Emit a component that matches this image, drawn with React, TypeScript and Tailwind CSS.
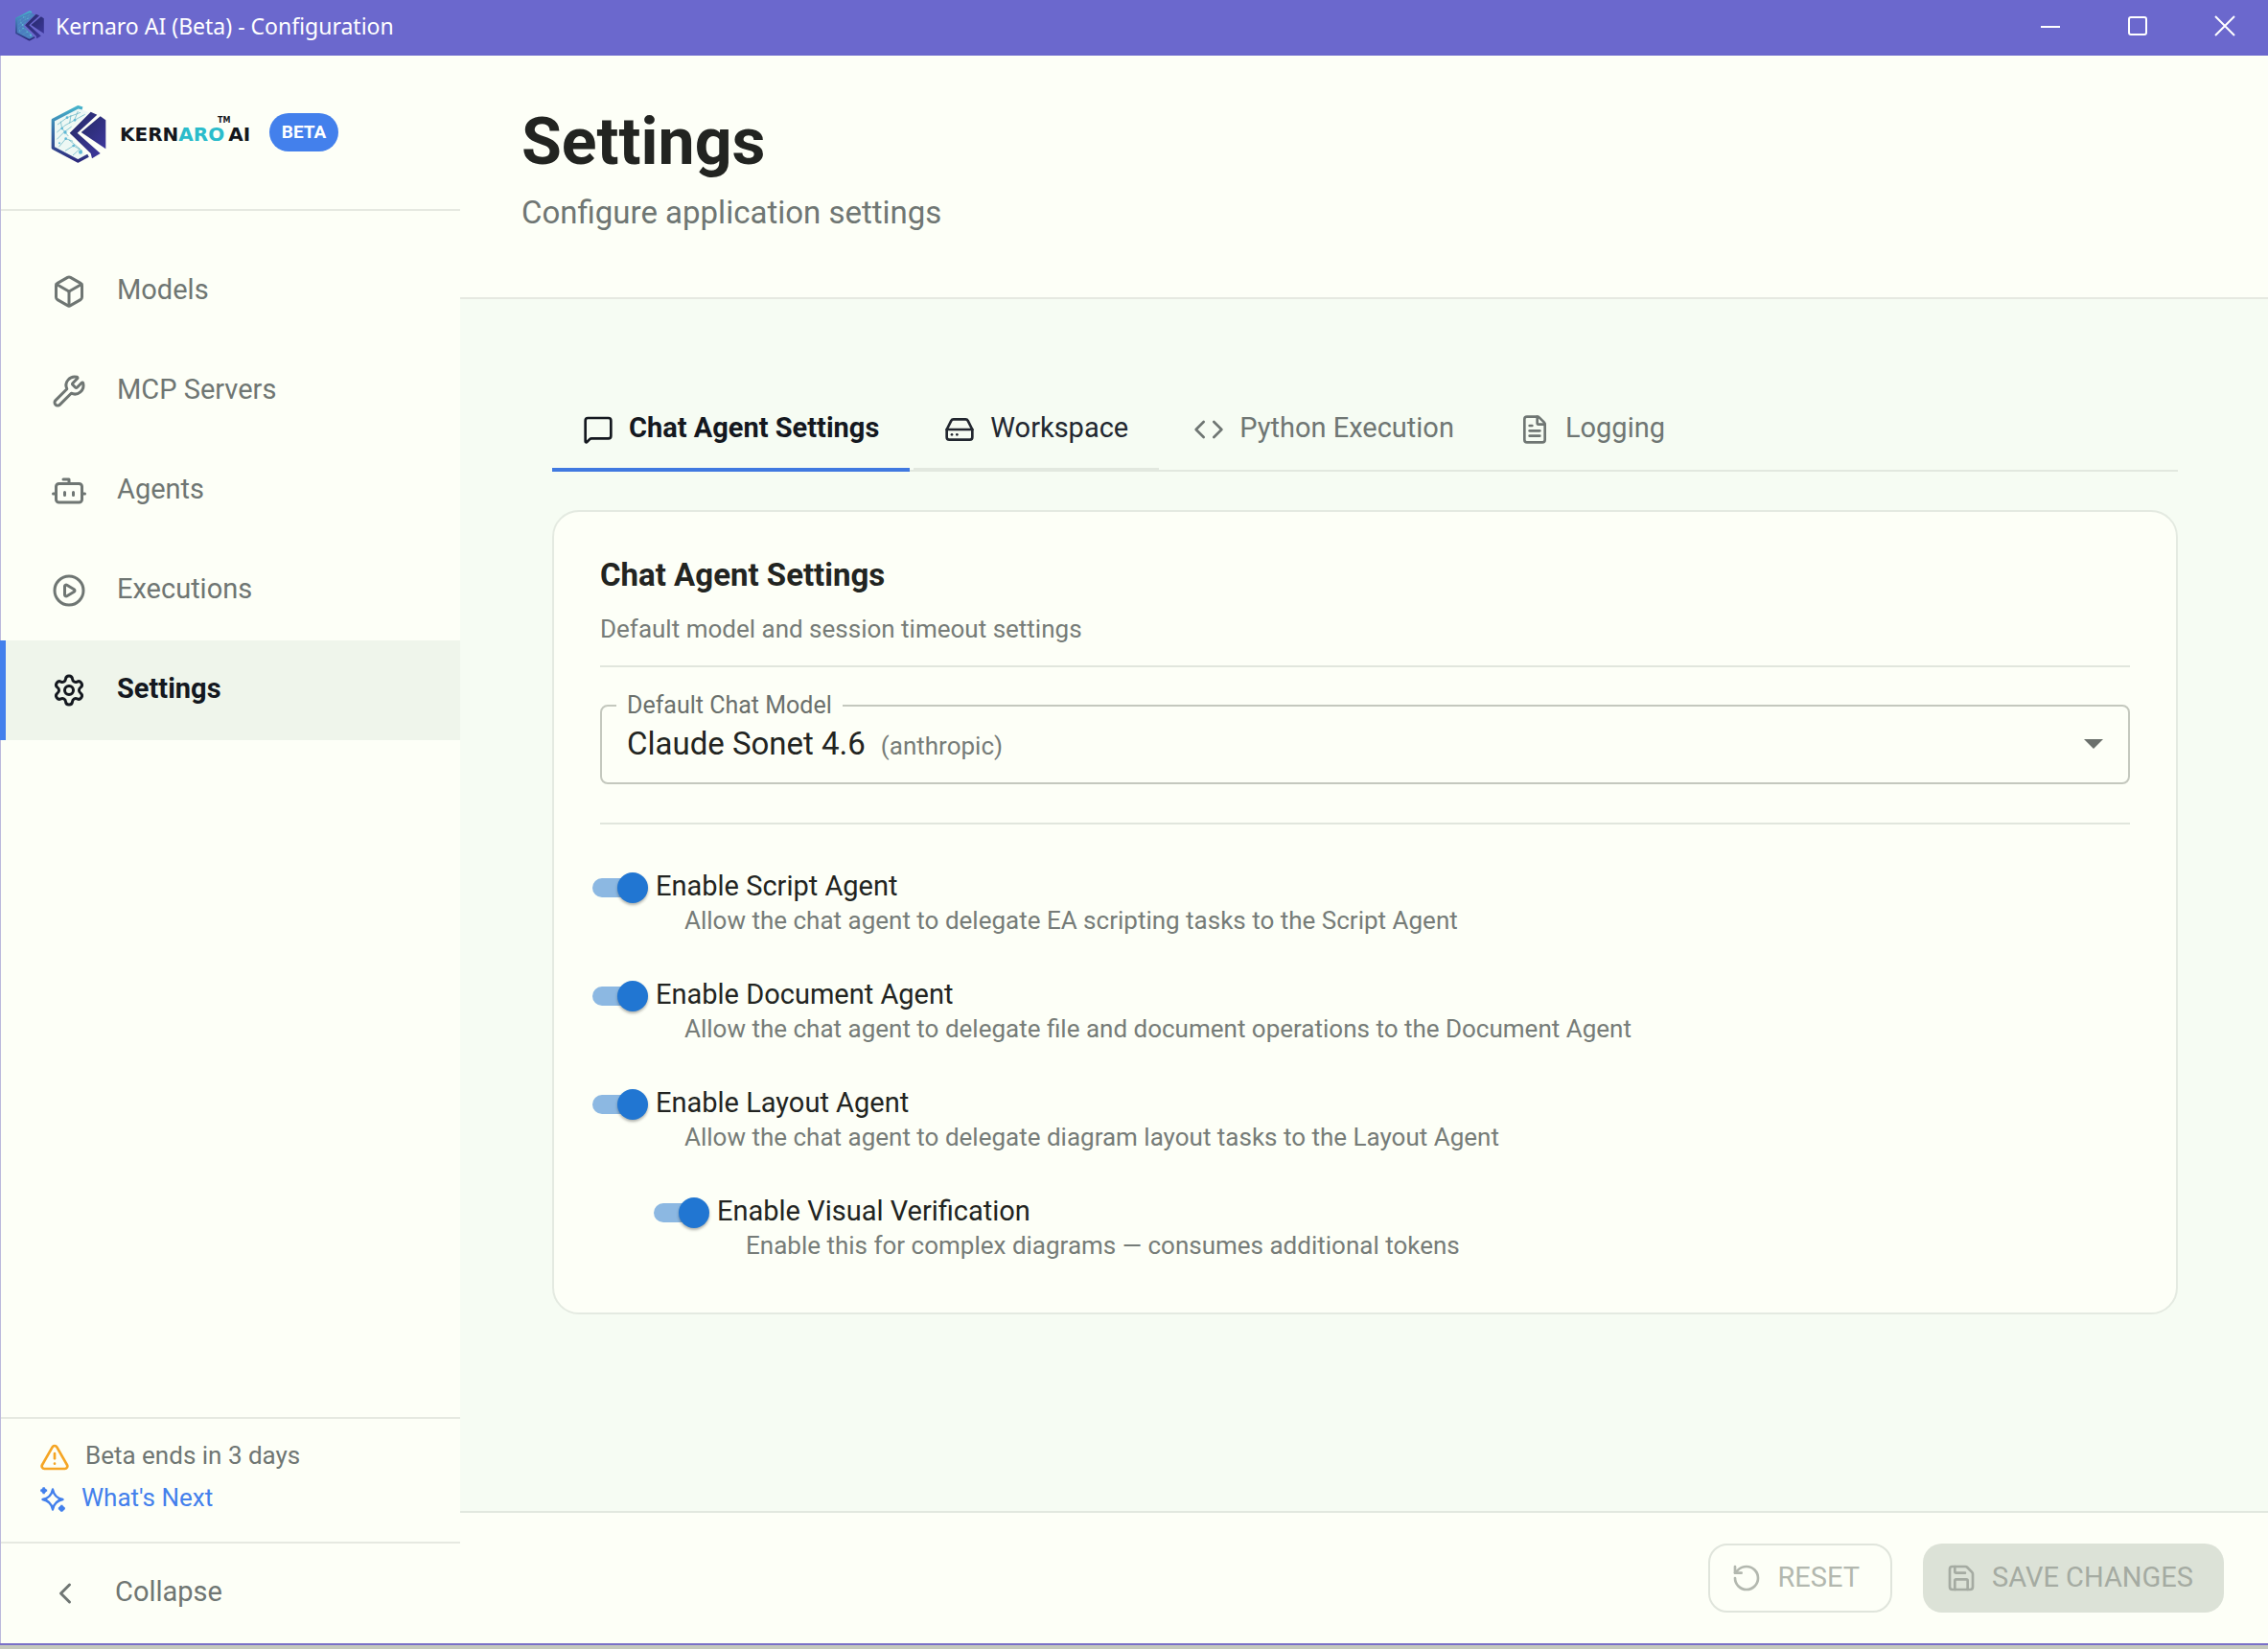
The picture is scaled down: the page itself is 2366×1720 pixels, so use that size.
import { useState } from "react";
import {
    Box,
    Wrench,
    CirclePlay,
    Settings,
    MessageSquare,
    HardDrive,
    Code,
    FileText,
    RotateCcw,
    Save,
    TriangleAlert,
    ChevronLeft,
} from "lucide-react";
import type { ComponentType } from "react";

interface IconProps {
    className?: string;
    strokeWidth?: number;
}

interface NavItem {
    label: string;
    icon: ComponentType<IconProps>;
}

interface AgentOption {
    id: string;
    label: string;
    description: string;
    nested?: boolean;
}

function BotIcon({ className }: IconProps) {
    return (
        <svg viewBox="0 0 24 24" className={className} fill="none" stroke="currentColor" strokeWidth="2" strokeLinecap="round" strokeLinejoin="round" aria-hidden="true">
            <path d="M12 7V4H8" />
            <rect width="18" height="13" x="3" y="7" rx="2" />
            <path d="M1 14h2M21 14h2M9 13v2M15 13v2" />
        </svg>
    );
}

function SparklesIcon({ className }: IconProps) {
    return (
        <svg viewBox="0 0 24 24" className={className} fill="none" stroke="currentColor" strokeWidth="2" strokeLinejoin="round" aria-hidden="true">
            <path d="M12 3c1 5.500 3.500 8 9 9-5.500 1-8 3.500-9 9-1-5.500-3.500-8-9-9 5.500-1 8-3.500 9-9z" />
            <circle cx="4" cy="4" r="2.200" fill="currentColor" stroke="none" />
            <circle cx="20" cy="20" r="2.500" fill="currentColor" stroke="none" />
            <path d="M4 1v6M1 4h6M20 17v6M17 20h6" />
        </svg>
    );
}

function LogoMark({ id, className, face }: { id: string; className?: string; face: string }) {
    return (
        <svg viewBox="0 0 172 180" className={className} aria-hidden="true">
            <defs>
                <linearGradient id={`${id}-edge`} x1="0" y1="0" x2="0" y2="1">
                    <stop offset="0" stopColor="#46b3cb" />
                    <stop offset="0.450" stopColor="#3a6fa8" />
                    <stop offset="1" stopColor="#2c2a7c" />
                </linearGradient>
                <linearGradient id={`${id}-core`} x1="0" y1="0" x2="1" y2="1">
                    <stop offset="0" stopColor="#252a66" />
                    <stop offset="1" stopColor="#3d379c" />
                </linearGradient>
            </defs>
            <path d="M84 8 L8 48 V132 L84 172 L112 158 L48 88 L118 22 Z" fill={face} />
            <path d="M98 9 L84 5 L6 46 V133 L84 174 L116 157" fill="none" stroke={`url(#${id}-edge)`} strokeWidth="10" strokeLinejoin="round" />
            <g fill="none" stroke="#57aebf" strokeWidth="2">
                <path d="M20 60 L50 38 L92 22 M18 84 L44 62 L84 40 L106 28 M18 106 L40 84 L64 66 M24 130 L46 104 L68 112 M44 142 L70 126 L98 142 M68 156 L90 136 L56 108 M30 50 L34 72 L54 96 M62 30 L58 56 M84 18 L72 48" />
            </g>
            <g fill="#5fb9d6">
                <circle cx="50" cy="38" r="4" />
                <circle cx="44" cy="84" r="5" />
                <circle cx="34" cy="72" r="4" />
                <circle cx="70" cy="126" r="4" />
                <circle cx="46" cy="104" r="4" />
                <circle cx="92" cy="146" r="6" />
                <circle cx="74" cy="46" r="4" />
                <circle cx="26" cy="118" r="3" />
            </g>
            <path d="M124 20 L144 29 L82 86 L154 150 L128 166 L124 150 L58 86 Z" fill={`url(#${id}-core)`} />
            <path d="M154 34 L171 46 V136 L94 84 Z" fill={`url(#${id}-core)`} />
        </svg>
    );
}

const navItems: NavItem[] = [
    { label: "Models", icon: Box },
    { label: "MCP Servers", icon: Wrench },
    { label: "Agents", icon: BotIcon },
    { label: "Executions", icon: CirclePlay },
    { label: "Settings", icon: Settings },
];

const tabs: NavItem[] = [
    { label: "Chat Agent Settings", icon: MessageSquare },
    { label: "Workspace", icon: HardDrive },
    { label: "Python Execution", icon: Code },
    { label: "Logging", icon: FileText },
];

const agentOptions: AgentOption[] = [
    {
        id: "script-agent",
        label: "Enable Script Agent",
        description: "Allow the chat agent to delegate EA scripting tasks to the Script Agent",
    },
    {
        id: "document-agent",
        label: "Enable Document Agent",
        description: "Allow the chat agent to delegate file and document operations to the Document Agent",
    },
    {
        id: "layout-agent",
        label: "Enable Layout Agent",
        description: "Allow the chat agent to delegate diagram layout tasks to the Layout Agent",
    },
    {
        id: "visual-verification",
        label: "Enable Visual Verification",
        description: "Enable this for complex diagrams — consumes additional tokens",
        nested: true,
    },
];

function TitleBar() {
    return (
        <header className="flex h-[58px] shrink-0 items-center bg-[#6b68cd] pb-1 pl-4 text-white">
            <LogoMark id="title-logo" className="h-8 w-[30px]" face="#4b7fc0" />
            <span className="ml-3 flex-1 font-['Noto_Sans',sans-serif] text-[23px] leading-8">
                Kernaro AI (Beta) - Configuration
            </span>
            <button aria-label="Minimize" className="flex h-full w-[91px] items-center justify-center">
                <svg viewBox="0 0 22 22" className="size-[22px]" stroke="currentColor" strokeWidth="2">
                    <path d="M1 12h20" />
                </svg>
            </button>
            <button aria-label="Maximize" className="flex h-full w-[91px] items-center justify-center">
                <svg viewBox="0 0 22 22" className="size-[22px]" fill="none" stroke="currentColor" strokeWidth="2">
                    <rect x="2" y="2" width="18" height="18" rx="2" />
                </svg>
            </button>
            <button aria-label="Close" className="flex h-full w-[91px] items-center justify-center">
                <svg viewBox="0 0 22 22" className="size-[22px]" stroke="currentColor" strokeWidth="2">
                    <path d="M1 1l20 20M21 1L1 21" />
                </svg>
            </button>
        </header>
    );
}

function Sidebar() {
    const [active, setActive] = useState("Settings");

    return (
        <aside className="flex w-[480px] shrink-0 flex-col border-l border-[#bcb9dc] bg-[#fdfff7]">
            <div className="flex h-[162px] items-center border-b-2 border-[#e6e9e1] pl-[52px]">
                <div className="flex items-center pt-1">
                    <LogoMark id="side-logo" className="h-[60px] w-[58px]" face="#eef8f4" />
                    <div className="relative ml-[14px] flex gap-1 font-['DejaVu_Sans',sans-serif] text-[20px] leading-8 font-bold text-[#14171c]">
                        <span>
                            KERN<span className="text-[#2bbccb]">ARO</span>
                        </span>
                        <span>AI</span>
                        <span className="absolute -top-1 left-[102px] text-[8px] leading-3">TM</span>
                    </div>
                </div>
                <span className="ml-5 flex h-10 w-[72px] items-center justify-center rounded-full bg-[#4380ec] text-[19px] font-bold text-white">
                    BETA
                </span>
            </div>

            <nav className="flex flex-1 flex-col pt-8">
                {navItems.map(({ label, icon: Icon }) => (
                    <button
                        key={label}
                        onClick={() => setActive(label)}
                        className={`-ml-px flex h-[104px] items-center gap-8 border-l-[6px] pl-12 text-left text-[29px] ${active === label
                            ? 'border-[#4380ec] bg-[#eff5eb] font-bold text-[#14181f]'
                            : 'border-transparent text-[#6f7673]'
                            }`}
                    >
                        <Icon className="size-9" strokeWidth={2} />
                        <span className="pb-1 leading-9">{label}</span>
                    </button>
                ))}
            </nav>

            <div className="flex h-[130px] flex-col gap-2 border-t-2 border-[#e6e9e1] pt-5 pl-10 text-[26px] leading-9">
                <div className="flex items-center gap-4 text-[#6f7673]">
                    <TriangleAlert className="mt-1 size-8 text-[#f5a524]" />
                    <span>Beta ends in 3 days</span>
                </div>
                <a href="#next" className="flex items-center gap-4 text-[#4380ec]">
                    <SparklesIcon className="mt-1 size-7" />
                    <span>What's Next</span>
                </a>
            </div>

            <button className="flex h-[106px] items-center gap-[34px] border-t-2 border-[#e6e9e1] pl-[49px] text-[29px] text-[#6f7673]">
                <ChevronLeft className="size-9" />
                <span className="pb-1 leading-9">Collapse</span>
            </button>
        </aside>
    );
}

function TabBar() {
    const [selected, setSelected] = useState("Chat Agent Settings");

    return (
        <div role="tablist" className="flex gap-1 border-b-2 border-[#e2e8df]">
            {tabs.map(({ label, icon: Icon }) => {
                const hovered = label === "Workspace";
                return (
                    <button
                        key={label}
                        role="tab"
                        aria-selected={selected === label}
                        onClick={() => setSelected(label)}
                        className={`-mb-[2px] flex h-[90px] items-center gap-4 border-b-4 px-8 pt-1 text-[29px] ${selected === label
                            ? 'border-[#4079e0] font-bold text-[#14181f]'
                            : hovered
                                ? 'border-[#e2e8df] text-[#22272f]'
                                : 'border-transparent text-[#6f7673]'
                            }`}
                    >
                        <Icon className="mt-[2px] size-8" />
                        <span>{label}</span>
                    </button>
                );
            })}
        </div>
    );
}

function AgentSwitch({ option }: { option: AgentOption }) {
    const [enabled, setEnabled] = useState(true);

    return (
        <div className={option.nested ? 'ml-16' : ''}>
            <div className="flex items-center">
                <span className="relative -ml-2 h-8 w-[58px] shrink-0">
                    <input
                        id={option.id}
                        type="checkbox"
                        role="switch"
                        checked={enabled}
                        onChange={(e) => setEnabled(e.target.checked)}
                        className="peer absolute inset-0 z-10 cursor-pointer opacity-0"
                    />
                    <span className="absolute top-[6px] left-0 h-5 w-[52px] rounded-full bg-[#b9beb5] peer-checked:bg-[#8cb8e2]" />
                    <span className="absolute top-0 left-0 size-8 rounded-full bg-[#2176d2] shadow-[0_2px_3px_rgba(0,0,0,0.3)] peer-checked:left-[26px]" />
                </span>
                <label htmlFor={option.id} className="ml-2 pb-1 text-[29px] leading-8 text-[#222421]">
                    {option.label}
                </label>
            </div>
            <p className="ml-[88px] text-[26px] leading-8 text-[#767c78]">{option.description}</p>
        </div>
    );
}

function ChatAgentCard() {
    return (
        <section className="mt-10 rounded-[28px] border-2 border-[#e4eae1] bg-[#fdfff7] px-12 pt-[46px] pb-[54px]">
            <h2 className="text-[33px] leading-10 font-bold text-[#222421]">Chat Agent Settings</h2>
            <p className="mt-5 border-b-2 border-[#e1e6dd] pb-[22px] text-[26px] leading-8 text-[#767c78]">
                Default model and session timeout settings
            </p>

            <fieldset className="mt-6 h-[98px] rounded-lg border-2 border-[#c4c8be]">
                <legend className="ml-[15px] px-[11px] text-[25px] leading-8 text-[#6b706c]">
                    <label htmlFor="chat-model">Default Chat Model</label>
                </legend>
                <div className="flex items-center pr-6 pl-[26px]">
                    <select
                        id="chat-model"
                        className="field-sizing-content appearance-none bg-transparent text-[33px] leading-12 text-[#222421]"
                    >
                        <option>Claude Sonet 4.6</option>
                    </select>
                    <span className="ml-4 flex-1 pt-1 text-[26px] leading-9 text-[#767c78]">(anthropic)</span>
                    <svg viewBox="0 0 20 10" className="mr-[2px] h-[10px] w-5" fill="#6b706c" aria-hidden="true">
                        <path d="M0 0h20L10 10z" />
                    </svg>
                </div>
            </fieldset>

            <div className="mt-10 flex flex-col gap-[45px] border-t-2 border-[#e1e6dd] pt-12">
                {agentOptions.map((option) => (
                    <AgentSwitch key={option.id} option={option} />
                ))}
            </div>
        </section>
    );
}

export default function App() {
    return (
        <div className="flex min-h-screen flex-col bg-[#c5c9bd] pb-1 font-['Roboto',sans-serif]">
            <TitleBar />
            <div className="flex flex-1 border-b-2 border-[#7a70c8]">
                <Sidebar />
                <div className="flex min-w-0 flex-1 flex-col bg-[#f6fcf3]">
                    <div className="h-[254px] border-b-2 border-[#e6e9e1] bg-[#fdfff7] pt-[50px] pl-16">
                        <h1 className="text-[68px] leading-20 font-bold text-[#222421]">Settings</h1>
                        <p className="mt-[10px] text-[33px] leading-12 text-[#6f7673]">Configure application settings</p>
                    </div>

                    <main className="flex-1 pt-[90px] pr-[94px] pl-24">
                        <TabBar />
                        <ChatAgentCard />
                    </main>

                    <footer className="flex h-[138px] items-center justify-end gap-8 border-t-2 border-[#e2e8df] bg-[#fdfff7] pr-[46px]">
                        <button
                            disabled
                            className="flex h-[72px] items-center gap-4 rounded-[20px] border-2 border-[#e0e5dc] px-[22px] pr-8 text-[29px] text-[#b3b8af]"
                        >
                            <RotateCcw className="size-8" />
                            RESET
                        </button>
                        <button
                            disabled
                            className="flex h-[72px] items-center gap-4 rounded-[20px] bg-[#dce2d7] pr-8 pl-6 text-[29px] text-[#a5aba2]"
                        >
                            <Save className="size-8" />
                            SAVE CHANGES
                        </button>
                    </footer>
                </div>
            </div>
        </div>
    );
}
